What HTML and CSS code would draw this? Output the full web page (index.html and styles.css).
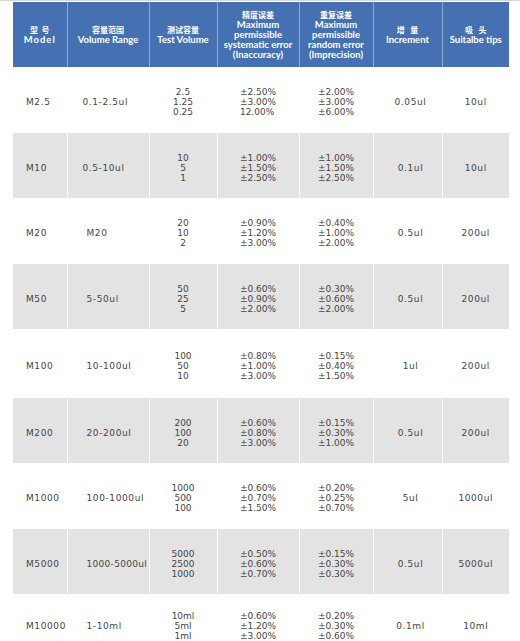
FILE: index.html
```html
<!DOCTYPE html>
<html lang="zh">
<head>
<meta charset="utf-8">
<title>Pipette specifications</title>
<link rel="stylesheet" href="styles.css">
</head>
<body>
<div class="topline"></div>
<table class="spec">
  <colgroup>
    <col class="c1"><col class="c2"><col class="c3"><col class="c4"><col class="c5"><col class="c6"><col class="c7">
  </colgroup>
  <thead>
    <tr>
      <th><span class="zh">型&nbsp;&nbsp;号</span><span class="en wide">Model</span></th>
      <th><span class="zh">容量范围</span><span class="en">Volume Range</span></th>
      <th><span class="zh">测试容量</span><span class="en">Test Volume</span></th>
      <th><span class="zh">精度误差</span><span class="en">Maximum</span><span class="en">permissible</span><span class="en">systematic error</span><span class="en">(Inaccuracy)</span></th>
      <th><span class="zh">重复误差</span><span class="en">Maximum</span><span class="en">permissible</span><span class="en">random error</span><span class="en">(Imprecision)</span></th>
      <th><span class="zh">增&nbsp;&nbsp;&nbsp;量</span><span class="en">Increment</span></th>
      <th><span class="zh">吸&nbsp;&nbsp;&nbsp;头</span><span class="en">Suitalbe tips</span></th>
    </tr>
  </thead>
  <tbody>
    <tr class="r1">
      <td class="model">M2.5</td><td class="range near">0.1-2.5ul</td>
      <td class="mid"><div class="stack ctr">2.5<br>1.25<br>0.25</div></td>
      <td class="mid"><div class="stack">±2.50%<br>±3.00%<br>12.00%</div></td>
      <td class="mid"><div class="stack">±2.00%<br>±3.00%<br>±6.00%</div></td>
      <td class="inc">0.05ul</td><td class="tip">10ul</td>
    </tr>
    <tr class="r2 alt">
      <td class="model">M10</td><td class="range near">0.5-10ul</td>
      <td class="mid"><div class="stack ctr">10<br>5<br>1</div></td>
      <td class="mid"><div class="stack">±1.00%<br>±1.50%<br>±2.50%</div></td>
      <td class="mid"><div class="stack">±1.00%<br>±1.50%<br>±2.50%</div></td>
      <td class="inc">0.1ul</td><td class="tip">10ul</td>
    </tr>
    <tr class="r3">
      <td class="model">M20</td><td class="range">M20</td>
      <td class="mid"><div class="stack ctr">20<br>10<br>2</div></td>
      <td class="mid"><div class="stack">±0.90%<br>±1.20%<br>±3.00%</div></td>
      <td class="mid"><div class="stack">±0.40%<br>±1.00%<br>±2.00%</div></td>
      <td class="inc">0.5ul</td><td class="tip">200ul</td>
    </tr>
    <tr class="r4 alt">
      <td class="model">M50</td><td class="range">5-50ul</td>
      <td class="mid"><div class="stack ctr">50<br>25<br>5</div></td>
      <td class="mid"><div class="stack">±0.60%<br>±0.90%<br>±2.00%</div></td>
      <td class="mid"><div class="stack">±0.30%<br>±0.60%<br>±2.00%</div></td>
      <td class="inc">0.5ul</td><td class="tip">200ul</td>
    </tr>
    <tr class="r5">
      <td class="model">M100</td><td class="range">10-100ul</td>
      <td class="mid"><div class="stack ctr">100<br>50<br>10</div></td>
      <td class="mid"><div class="stack">±0.80%<br>±1.00%<br>±3.00%</div></td>
      <td class="mid"><div class="stack">±0.15%<br>±0.40%<br>±1.50%</div></td>
      <td class="inc">1ul</td><td class="tip">200ul</td>
    </tr>
    <tr class="r6 alt">
      <td class="model">M200</td><td class="range">20-200ul</td>
      <td class="mid"><div class="stack ctr">200<br>100<br>20</div></td>
      <td class="mid"><div class="stack">±0.60%<br>±0.80%<br>±3.00%</div></td>
      <td class="mid"><div class="stack">±0.15%<br>±0.30%<br>±1.00%</div></td>
      <td class="inc">0.5ul</td><td class="tip">200ul</td>
    </tr>
    <tr class="r7">
      <td class="model">M1000</td><td class="range">100-1000ul</td>
      <td class="mid"><div class="stack ctr">1000<br>500<br>100</div></td>
      <td class="mid"><div class="stack">±0.60%<br>±0.70%<br>±1.50%</div></td>
      <td class="mid"><div class="stack">±0.20%<br>±0.25%<br>±0.70%</div></td>
      <td class="inc">5ul</td><td class="tip">1000ul</td>
    </tr>
    <tr class="r8 alt">
      <td class="model">M5000</td><td class="range tight">1000-5000ul</td>
      <td class="mid"><div class="stack ctr">5000<br>2500<br>1000</div></td>
      <td class="mid"><div class="stack">±0.50%<br>±0.60%<br>±0.70%</div></td>
      <td class="mid"><div class="stack">±0.15%<br>±0.30%<br>±0.30%</div></td>
      <td class="inc">0.5ul</td><td class="tip">5000ul</td>
    </tr>
    <tr class="r9">
      <td class="model">M10000</td><td class="range">1-10ml</td>
      <td class="mid"><div class="stack ctr">10ml<br>5ml<br>1ml</div></td>
      <td class="mid"><div class="stack">±0.60%<br>±1.20%<br>±3.00%</div></td>
      <td class="mid"><div class="stack">±0.20%<br>±0.30%<br>±0.60%</div></td>
      <td class="inc">0.1ml</td><td class="tip">10ml</td>
    </tr>
  </tbody>
</table>
</body>
</html>
```

FILE: styles.css
```css
html, body {
  margin: 0;
  padding: 0;
  background: #ffffff;
}

body {
  width: 520px;
  height: 641px;
  overflow: hidden;
}

.topline {
  height: 1px;
  background: #d6d6d6;
  margin-bottom: 1px;
}

.spec {
  margin-left: 13px;
  width: 496px;
  table-layout: fixed;
  border-collapse: collapse;
  border-spacing: 0;
}

.c1 { width: 54px; }
.c2 { width: 82px; }
.c3 { width: 68px; }
.c4 { width: 82px; }
.c5 { width: 74px; }
.c6 { width: 69px; }
.c7 { width: 67px; }

.spec th {
  height: 65px;
  padding: 0;
  background: #4571b3;
  color: #ffffff;
  text-align: center;
  vertical-align: middle;
  font-family: "Lato", "Noto Sans CJK SC", sans-serif;
  font-weight: 700;
  border-right: 1px solid #8eabd8;
}

.spec th:last-child,
.spec td:last-child {
  border-right: none;
}

.zh {
  display: block;
  font-family: "Noto Sans CJK SC", sans-serif;
  font-size: 8px;
  line-height: 10px;
  font-weight: 700;
}

.en {
  display: block;
  font-size: 9.5px;
  line-height: 10px;
  white-space: nowrap;
}

.en.wide {
  letter-spacing: 1px;
}

.spec td {
  padding: 4px 0 0 0;
  font-family: "DejaVu Sans", sans-serif;
  font-size: 9px;
  line-height: 10px;
  color: #454545;
  vertical-align: middle;
  border-right: 1px solid #ffffff;
  white-space: nowrap;
}

.spec tr.alt td {
  background: #e3e3e3;
}

.r1 td { height: 62px; }
.r2 td { height: 61px; }
.r3 td { height: 62px; }
.r4 td { height: 61px; }
.r5 td { height: 65px; }
.r6 td { height: 61px; }
.r7 td { height: 62px; }
.r8 td { height: 61px; }
.r9 td { height: 56px; }

.model {
  padding-left: 13px !important;
  text-align: left;
  letter-spacing: 0.6px;
}

.range {
  padding-left: 19px !important;
  text-align: left;
  letter-spacing: 0.6px;
}

.range.near {
  padding-left: 15px !important;
}

.range.tight {
  letter-spacing: 0.3px;
}

.mid {
  text-align: center;
}

.inc {
  text-align: center;
  padding-left: 6px !important;
  letter-spacing: 0.6px;
}

.tip {
  text-align: center;
  letter-spacing: 0.6px;
}

.stack {
  display: inline-block;
  text-align: left;
}

.stack.ctr {
  text-align: center;
}
```
